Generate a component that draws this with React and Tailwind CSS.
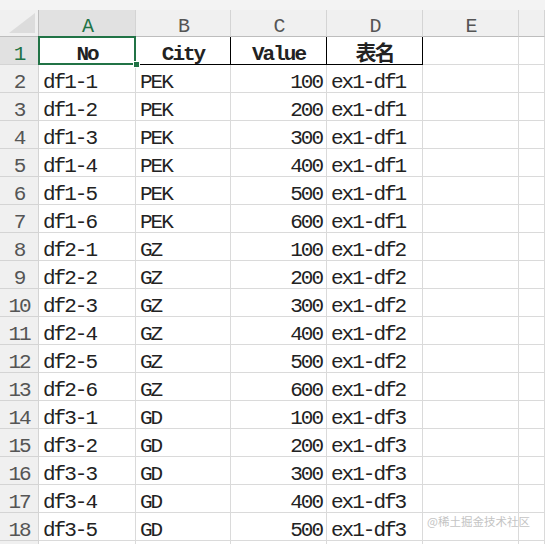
import React from "react";

const cols = ["A", "B", "C", "D", "E", ""];

const rows = [];
const groups = [
  ["df1", "PEK", "ex1-df1", 6],
  ["df2", "GZ", "ex1-df2", 6],
  ["df3", "GD", "ex1-df3", 5],
];
groups.forEach(([name, city, sheet, n]) => {
  for (let i = 1; i <= n; i++) {
    rows.push([`${name}-${i}`, city, String(i * 100), sheet]);
  }
});

const font = "font-['Liberation_Mono','Noto_Sans_CJK_SC',monospace]";

const Cell = ({ children, className = "" }) => (
  <div className={`h-[28px] border-r border-b border-[#dadada] bg-white flex items-center leading-[21px] pt-[7px] px-[4px] overflow-hidden whitespace-nowrap ${className}`}>
    {children}
  </div>
);

const RowHead = ({ children, active }) => (
  <div
    className={`h-[28px] border-r border-b border-[#d4d4d4] flex items-center justify-center leading-[21px] pt-[7px] ${
      active ? "bg-[#e1e1e1] text-[#217346]" : "bg-[#f0f0f0] text-[#555]"
    }`}
  >
    {children}
  </div>
);

export default function App() {
  return (
    <div className={`relative w-[545px] h-[544px] overflow-hidden bg-[#f3f3f3] ${font} text-[21px] tracking-[-2px] text-[#222]`}>
      <div className="h-[10px] bg-[#f3f3f3]" />
      <div className="grid grid-cols-[39px_97px_95px_96px_96px_96px_1fr]">
        {/* column headers */}
        <div className="h-[27px] bg-[#f0f0f0] border-r border-b border-[#bdbdbd] relative overflow-hidden">
          <svg className="absolute right-[3px] bottom-[3px]" width="26" height="20" viewBox="0 0 26 20">
            <polygon points="26,0 26,20 0,20" fill="#dcdcdc" />
          </svg>
        </div>
        {cols.map((c, i) => (
          <div
            key={i}
            className={`h-[27px] border-r border-b border-[#d4d4d4] border-b-[#bdbdbd] flex items-center justify-center text-[20px] leading-[20px] pt-[8px] ${
              i === 0 ? "bg-[#e1e1e1] text-[#217346]" : "bg-[#f0f0f0] text-[#555]"
            }`}
          >
            {c}
          </div>
        ))}

        {/* row 1 */}
        <RowHead active>1</RowHead>
        <div className="relative">
          <Cell className="justify-center font-bold">No</Cell>
          <div className="absolute -left-[1px] -top-[1px] w-[98px] h-[29px] border-2 border-[#217346]" />
          <div className="absolute -right-[4px] -bottom-[3px] w-[7px] h-[7px] bg-[#217346] border border-white" />
        </div>
        <Cell className="justify-center font-bold border-b-black border-r-black">City</Cell>
        <Cell className="justify-center font-bold border-b-black border-r-black">Value</Cell>
        <Cell className="justify-center font-bold border-b-black border-r-black">表名</Cell>
        <Cell />
        <Cell />

        {rows.map((r, i) => (
          <React.Fragment key={i}>
            <RowHead>{i + 2}</RowHead>
            <Cell>{r[0]}</Cell>
            <Cell>{r[1]}</Cell>
            <Cell className="justify-end">{r[2]}</Cell>
            <Cell>{r[3]}</Cell>
            <Cell />
            <Cell />
          </React.Fragment>
        ))}
        <RowHead />
        <Cell />
        <Cell />
        <Cell />
        <Cell />
        <Cell />
        <Cell />
      </div>
      <div className="absolute left-[427px] top-[513px] text-[11.5px] leading-[16px] tracking-normal text-[#c4c4c4] font-['Noto_Sans_CJK_SC',sans-serif]">
        @稀土掘金技术社区
      </div>
    </div>
  );
}
